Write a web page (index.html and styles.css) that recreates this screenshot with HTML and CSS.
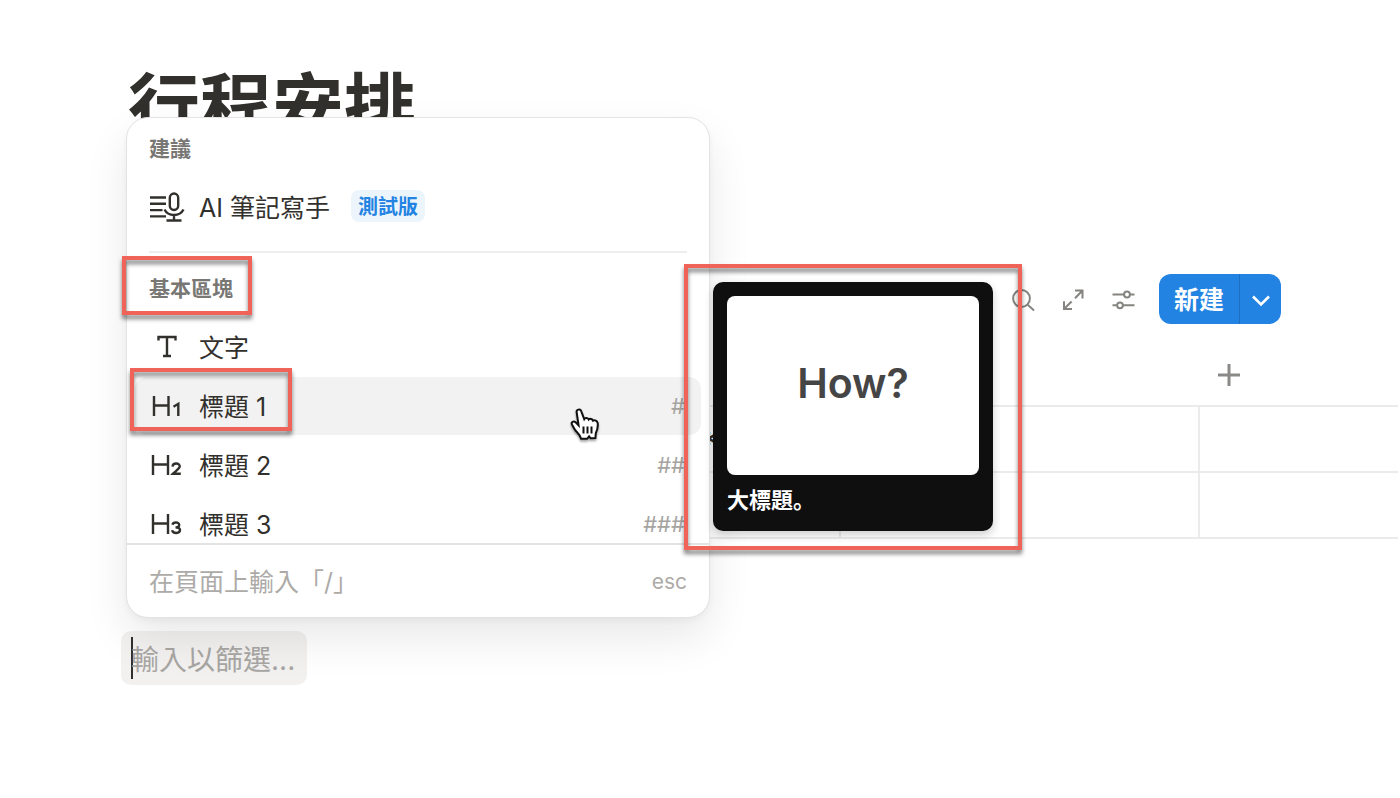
FILE: index.html
```html
<!DOCTYPE html>
<html lang="zh-Hant">
<head>
<meta charset="utf-8">
<meta name="viewport" content="width=device-width, initial-scale=1">
<title>行程安排</title>
<link rel="stylesheet" href="styles.css">
</head>
<body>
<main class="page">
  <h1 class="page-title">行程安排</h1>

  <div class="toolbar">
    <div class="toolbar-icons">
      <button class="icon-button" type="button" aria-label="搜尋">
        <svg viewBox="0 0 24 24"><circle cx="10.5" cy="10.5" r="8.400"/><path d="M16.700 16.700 23 22.600"/></svg>
      </button>
      <button class="icon-button" type="button" aria-label="展開">
        <svg viewBox="0 0 24 24"><path d="M14 2.500h7.500v8M21.500 2.500 14 10.200M10.600 13.500 3 21M3 13.200V21h8"/></svg>
      </button>
      <button class="icon-button" type="button" aria-label="檢視設定">
        <svg viewBox="0 0 24 24"><path d="M1.500 6.500H13M19 6.500h4.500M1.500 17.300H6M12 17.300h11.500"/><circle cx="16" cy="6.500" r="2.900"/><circle cx="9" cy="17.300" r="2.900"/></svg>
      </button>
    </div>
    <div class="new-group">
      <button class="new-main" type="button">新建</button>
      <button class="new-more" type="button" aria-label="更多選項">
        <svg viewBox="0 0 20 20"><path d="m2 7.500 8 8 8-8"/></svg>
      </button>
    </div>
  </div>

  <table class="database">
    <colgroup><col class="col-name"><col class="col-prop"><col class="col-prop"><col></colgroup>
    <thead>
      <tr>
        <td></td><td></td><td></td>
        <th scope="col"><button class="add-column" type="button" aria-label="新增欄位"><svg viewBox="0 0 24 24"><path d="M12 1v22M1 12h22"/></svg></button></th>
      </tr>
    </thead>
    <tbody>
      <tr><td></td><td class="cell-mark">*</td><td></td><td></td></tr>
      <tr><td></td><td></td><td></td><td></td></tr>
    </tbody>
  </table>

  <label class="filter">
    <span class="caret"></span>
    <input class="filter-input" type="text" aria-label="篩選區塊" placeholder="輸入以篩選...">
  </label>

  <section class="menu" aria-label="區塊選單">
    <div class="menu-list">
      <h2 class="menu-label">建議</h2>
      <button class="menu-item" type="button">
        <svg class="menu-icon" viewBox="0 0 36 36"><path d="M1 9.500h16M1 15.800h16M1 22.100h12.500M1 28.400h16"/><rect x="20.800" y="5.500" width="8.400" height="16.500" rx="4.200"/><path d="M15.500 21.500c2 4 5.500 5.500 9.500 5.500s7.500-1.500 9.500-5.500M25 27v5.500M17.500 32.500h15"/></svg>
        <span>AI 筆記寫手</span>
        <span class="badge">測試版</span>
      </button>
      <hr class="divider">
      <h2 class="menu-label">基本區塊</h2>
      <button class="menu-item" type="button">
        <svg class="menu-icon" viewBox="0 0 36 36"><path d="M9.500 12.500V9h17v3.500M18 9v19M14 28h8"/></svg>
        <span>文字</span>
      </button>
      <button class="menu-item is-active" type="button">
        <svg class="menu-icon" viewBox="0 0 36 36"><path d="M5 9v20M19.500 9v20M5 18.500h14.500"/><path class="digit" d="m24.500 19.800 4.800-3v12.200"/></svg>
        <span>標題 1</span>
        <span class="shortcut">#</span>
      </button>
      <button class="menu-item" type="button">
        <svg class="menu-icon" viewBox="0 0 36 36"><path d="M4 9v20M19 9v20M4 18.500h15"/><path class="digit" d="M23.500 20.600c.3-4.300 7.600-4 7.200.1-.2 2.100-4.100 4.300-6.700 7h7.800"/></svg>
        <span>標題 2</span>
        <span class="shortcut">##</span>
      </button>
      <button class="menu-item" type="button">
        <svg class="menu-icon" viewBox="0 0 36 36"><path d="M4 9v20M19 9v20M4 18.500h15"/><path class="digit" d="M23.500 19.800c.6-3.200 6.800-3.100 6.700.2 0 1.600-1.300 2.400-3.700 2.400 2.800 0 4.500.8 4.500 2.700 0 3.800-7.200 3.800-7.900.2"/></svg>
        <span>標題 3</span>
        <span class="shortcut">###</span>
      </button>
    </div>
    <div class="menu-footer"><span>在頁面上輸入「/」</span><kbd class="esc">esc</kbd></div>
  </section>

  <div class="tooltip" role="tooltip">
    <div class="preview">How?</div>
    <p class="tooltip-text" lang="zh-Hans">大標題。</p>
  </div>

  <div class="mark mark-section"></div>
  <div class="mark mark-heading"></div>
  <div class="mark mark-preview"></div>

  <svg class="cursor" viewBox="0 0 30 34"><path d="M6.700 4.500c-.9-3 3.600-4.200 4.600-1.200l2.900 7.700c.8-1.500 3.800-1.300 4.500.5 1.200-1.200 3.800-.6 4.400 1.200 1.500-1 4.200.1 4.600 2.400.5 4.200-.2 6.600-1.900 10l-.4 5-4.800.2-1.500-2-2 2.500-6-.1c-.7-3.500-3.300-5.500-5.600-8.200-1.500-2-2.300-4-3.500-6-1.300-2.400 1.600-3.800 3.600-2.200l3 3z"/><path d="M13.500 18.500v7M17.500 18.500v7M21.500 18.500v7"/></svg>
</main>
</body>
</html>
```

FILE: styles.css
```css
* {
  box-sizing: border-box;
}

body {
  margin: 0;
  background: #fff;
  color: #32302c;
  font-family: Inter, "Noto Sans CJK TC", sans-serif;
}

button {
  border: 0;
  padding: 0;
  background: none;
  color: inherit;
  font: inherit;
  cursor: pointer;
}

svg {
  display: block;
  fill: none;
  stroke: currentColor;
  stroke-width: 2;
}

.page {
  position: relative;
  min-height: 100vh;
  padding: 71px 2px 0 128px;
  overflow: hidden;
}

.page-title {
  margin: 0;
  font-size: 72px;
  line-height: 72px;
  font-weight: 700;
}

/* Database toolbar */
.toolbar {
  display: flex;
  justify-content: flex-end;
  align-items: center;
  gap: 24px;
  margin-top: 131px;
  padding-right: 117px;
}

.toolbar-icons {
  display: flex;
  gap: 26px;
  padding-top: 2px;
  color: #858481;
}

.icon-button svg {
  width: 24px;
  height: 24px;
}

.new-group {
  display: flex;
  height: 50px;
  border-radius: 12px;
  overflow: hidden;
  background: #2383e2;
  color: #fff;
}

.new-main {
  width: 80px;
  padding-bottom: 2px;
  font-size: 25px;
  font-weight: 700;
}

.new-more {
  display: grid;
  place-items: center;
  width: 42px;
  border-left: 1px solid #1c6fc2;
}

.new-more svg {
  width: 20px;
  height: 20px;
  stroke-width: 2.6;
}

/* Database table */
.database {
  width: 100%;
  margin-top: 20px;
  border-collapse: collapse;
  table-layout: fixed;
}

.col-name {
  width: 353px;
}

.col-prop {
  width: 359px;
}

.database th,
.database td {
  padding: 0;
}

.database thead tr {
  height: 62px;
}

.database th {
  padding-left: 18px;
  text-align: left;
}

.database tbody tr {
  height: 66px;
}

.database tbody td {
  border: 2px solid #ebebea;
  border-left: 0;
}

.database tbody td:last-child {
  border-right: 0;
}

.database .cell-mark {
  padding: 12px 0 0 218px;
  font-size: 32px;
  line-height: 32px;
  font-weight: 600;
}

.add-column {
  display: block;
  color: #8a8987;
}

.add-column svg {
  width: 24px;
  height: 24px;
  stroke-width: 3;
}

/* Slash filter field */
.filter {
  display: flex;
  align-items: center;
  width: 186px;
  height: 54px;
  margin: 92px 0 0 -7px;
  padding-left: 10px;
  border-radius: 10px;
  background: #f2f1f0;
}

.caret {
  width: 2px;
  height: 42px;
  background: #32302c;
}

.filter-input {
  flex: 1;
  min-width: 0;
  margin-left: -2px;
  border: 0;
  padding: 3px 0 0;
  outline: 0;
  background: none;
  font: 28px/42px Inter, "Noto Sans CJK TC", sans-serif;
}

.filter-input::placeholder {
  color: #a8a6a3;
  opacity: 1;
}

/* Block menu */
.menu {
  position: absolute;
  top: 117px;
  left: 126px;
  width: 584px;
  border: 1px solid #e3e3e2;
  border-radius: 22px;
  overflow: hidden;
  background: #fff;
  box-shadow: 0 20px 44px rgba(15, 15, 15, 0.09), 0 3px 6px rgba(15, 15, 15, 0.04);
}

.menu-list {
  max-height: 425px;
  overflow: hidden;
}

.menu-label {
  margin: 0;
  padding: 2px 22px 0;
  color: #787774;
  font-size: 21px;
  line-height: 58px;
  font-weight: 600;
}

.menu-item {
  display: flex;
  align-items: center;
  gap: 14px;
  width: calc(100% - 16px);
  height: 58px;
  margin: 0 8px 1px;
  padding: 0 14px 2px;
  border-radius: 12px;
  font-size: 25px;
  text-align: left;
}

.menu-item.is-active {
  background: #f2f2f2;
}

.menu-icon {
  flex: none;
  width: 36px;
  height: 36px;
  stroke-width: 2.4;
}

.badge {
  margin-left: 7px;
  padding: 2px 7px 0;
  border-radius: 8px;
  background: #edf5fc;
  color: #2383e2;
  font-size: 20px;
  line-height: 30px;
  font-weight: 600;
}

.shortcut {
  margin-left: auto;
  padding: 2px 2px 0 0;
  color: #a5a4a1;
  font-size: 22px;
}

.divider {
  height: 2px;
  margin: 15px 22px 5px;
  border: 0;
  background: #ededec;
}

.menu-footer {
  display: flex;
  justify-content: space-between;
  align-items: center;
  height: 74px;
  padding: 0 22px 2px;
  border-top: 2px solid #e3e3e2;
  color: #adaba8;
  font-size: 25px;
}

.esc {
  padding-top: 2px;
  font-family: inherit;
  font-size: 21px;
}

/* Heading preview */
.tooltip {
  position: absolute;
  top: 282px;
  left: 713px;
  width: 280px;
  padding: 14px 14px 12px;
  border-radius: 10px;
  background: #0f0f0f;
  color: #fff;
  box-shadow: 0 4px 8px rgba(15, 15, 15, 0.2);
}

.preview {
  display: grid;
  place-items: center;
  height: 179px;
  padding-bottom: 6px;
  border-radius: 8px;
  background: #fff;
  color: #454545;
  font-size: 41px;
  font-weight: 600;
}

.tooltip-text {
  margin: 8px 0 2px;
  font-family: Inter, "Noto Sans CJK SC", sans-serif;
  font-size: 22px;
  line-height: 34px;
  font-weight: 700;
}

/* Callout frames */
.mark {
  position: absolute;
  border: 4px solid #ef6358;
  filter: drop-shadow(0 4px 2px rgba(0, 0, 0, 0.5));
  pointer-events: none;
}

.mark-section {
  top: 256px;
  left: 122px;
  width: 130px;
  height: 59px;
}

.mark-heading {
  top: 368px;
  left: 130px;
  width: 162px;
  height: 63px;
}

.mark-preview {
  top: 264px;
  left: 684px;
  width: 338px;
  height: 286px;
}

.cursor {
  position: absolute;
  top: 408px;
  left: 570px;
  width: 30px;
  height: 34px;
  color: #111;
  filter: drop-shadow(0 2px 1px rgba(0, 0, 0, 0.35));
}

.cursor path:first-child {
  fill: #fff;
}
```
